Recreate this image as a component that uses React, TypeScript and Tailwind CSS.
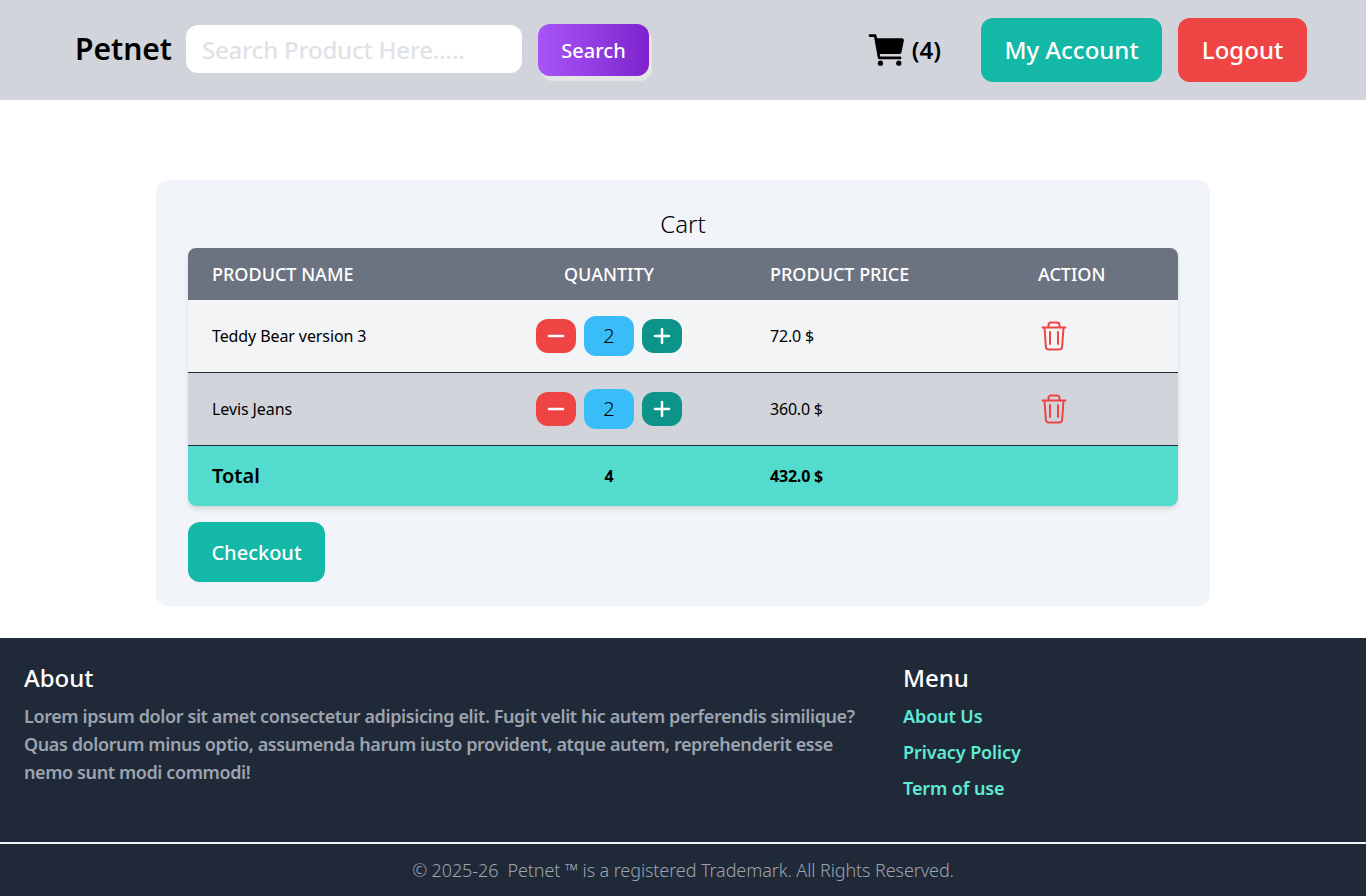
import { Minus, Plus } from 'lucide-react';
import { IoCart } from 'react-icons/io5';

const items = [
  { name: 'Teddy Bear version 3', qty: 2, price: '72.0 $', rowClass: 'h-[72px] bg-[#f3f4f6]' },
  { name: 'Levis Jeans', qty: 2, price: '360.0 $', rowClass: 'h-[73px] bg-[#d1d5db]' },
];

function TrashIcon() {
  return (
    <svg width="28" height="32" viewBox="0 0 28 32" fill="none" stroke="#ef4444" strokeWidth="2" strokeLinecap="round" strokeLinejoin="round" className="ml-0.5">
      <path d="M2.5 7.5h23" />
      <path d="M8.5 7V5a2.5 2.5 0 0 1 2.5-2.5h6a2.5 2.5 0 0 1 2.5 2.5v2" />
      <path d="M4.5 8l1.4 19a2.6 2.6 0 0 0 2.6 2.4h11a2.6 2.6 0 0 0 2.6-2.4L23.5 8" />
      <path d="M10 12v12" />
      <path d="M18 12v12" />
    </svg>
  );
}

function Header() {
  return (
    <header className="h-[100px] bg-[#d1d5db] flex items-center pl-[75px] pr-[59px]">
      <span className="w-[111px] text-[30px] font-semibold text-black -mt-1">Petnet</span>
      <input
        className="w-[336px] h-12 bg-white rounded-xl px-4 text-2xl font-medium outline-none placeholder:text-[#dfe2e7] -mt-0.5 tracking-[-0.2px]"
        placeholder="Search Product Here....."
      />
      <button className="ml-4 w-[111px] h-[52px] pt-0.5 rounded-xl bg-gradient-to-r from-[#a855f7] to-[#7e22ce] text-white text-xl font-medium shadow-[3px_5px_0_#e5e5e5]">
        Search
      </button>
      <div className="ml-auto flex items-center gap-1 mr-10 text-2xl font-semibold text-black">
        <IoCart className="w-[42px] h-[42px]" />
        <span>(4)</span>
      </div>
      <button className="w-[181px] h-16 rounded-xl bg-[#14b8a6] text-white text-2xl font-medium">My Account</button>
      <button className="ml-4 w-[129px] h-16 rounded-xl bg-[#ef4444] text-white text-2xl font-medium">Logout</button>
    </header>
  );
}

function QtyControl({ qty }: { qty: number }) {
  return (
    <div className="flex items-center justify-center gap-2">
      <button className="w-10 h-[34px] rounded-xl bg-[#ef4444] text-white flex items-center justify-center">
        <Minus size={24} strokeWidth={2.5} />
      </button>
      <span className="w-[50px] h-10 rounded-xl bg-[#38bdf8] text-black text-xl font-light flex items-center justify-center">{qty}</span>
      <button className="w-10 h-[34px] rounded-xl bg-[#0d9488] text-white flex items-center justify-center">
        <Plus size={24} strokeWidth={2.5} />
      </button>
    </div>
  );
}

function CartTable() {
  return (
    <div className="rounded-lg overflow-hidden shadow-md">
      <table className="w-full table-fixed text-left">
        <colgroup>
          <col className="w-[283px]" />
          <col className="w-[276px]" />
          <col className="w-[267px]" />
          <col />
        </colgroup>
        <thead className="bg-[#6b7280] text-white text-lg uppercase">
          <tr className="h-[52px]">
            <th className="px-6 font-medium">Product Name</th>
            <th className="px-6 font-medium text-center">Quantity</th>
            <th className="pl-[23px] font-medium">Product Price</th>
            <th className="px-6 font-medium">Action</th>
          </tr>
        </thead>
        <tbody className="text-base text-black">
          {items.map((item) => (
            <tr key={item.name} className={`border-b border-[#1f2937] ${item.rowClass}`}>
              <td className="px-6 tracking-[-0.1px]">{item.name}</td>
              <td className="px-6"><QtyControl qty={item.qty} /></td>
              <td className="pl-[23px] tracking-[-0.2px]">{item.price}</td>
              <td className="px-6"><TrashIcon /></td>
            </tr>
          ))}
          <tr className="h-[61px] bg-[#53dccd] font-bold">
            <td className="px-6 text-xl font-semibold">Total</td>
            <td className="px-6 text-center">4</td>
            <td className="pl-[23px] tracking-[-0.2px]">432.0 $</td>
            <td className="px-6"></td>
          </tr>
        </tbody>
      </table>
    </div>
  );
}

function Footer() {
  return (
    <footer className="bg-[#1f2937]">
      <div className="h-[204px] flex px-6 pt-6">
        <div className="w-[879px]">
          <h3 className="text-2xl font-medium text-white leading-8">About</h3>
          <p className="mt-2 w-[850px] text-lg font-semibold leading-7 text-[#9ca3af] tracking-[-0.4px]">
            Lorem ipsum dolor sit amet consectetur adipisicing elit. Fugit velit hic autem perferendis similique? Quas dolorum minus optio, assumenda harum iusto provident, atque autem, reprehenderit esse nemo sunt modi commodi!
          </p>
        </div>
        <div>
          <h3 className="text-2xl font-medium text-white leading-8">Menu</h3>
          <ul className="mt-2 flex flex-col gap-2 text-lg font-semibold leading-7 text-[#5eead4] tracking-[-0.1px]">
            <li>About Us</li>
            <li>Privacy Policy</li>
            <li>Term of use</li>
          </ul>
        </div>
      </div>
      <div className="border-t-2 border-[#f3f4f6] h-[54px] flex items-center justify-center text-lg font-light text-[#9ca3af] tracking-[-0.1px]">
        © 2025-26&nbsp; Petnet ™ is a registered Trademark. All Rights Reserved.
      </div>
    </footer>
  );
}

export default function App() {
  return (
    <div className="min-h-[896px] bg-white font-['Noto_Sans',sans-serif]">
      <Header />
      <main className="h-[538px] pt-20">
        <div className="mx-auto w-[1054px] h-[426px] rounded-xl bg-[#f1f5f9] px-8 pt-8">
          <h2 className="text-2xl font-light text-center text-black leading-6 mb-3">Cart</h2>
          <CartTable />
          <button className="mt-4 w-[137px] h-[60px] pt-0.5 rounded-xl bg-[#14b8a6] text-white text-xl font-medium">Checkout</button>
        </div>
      </main>
      <Footer />
    </div>
  );
}
